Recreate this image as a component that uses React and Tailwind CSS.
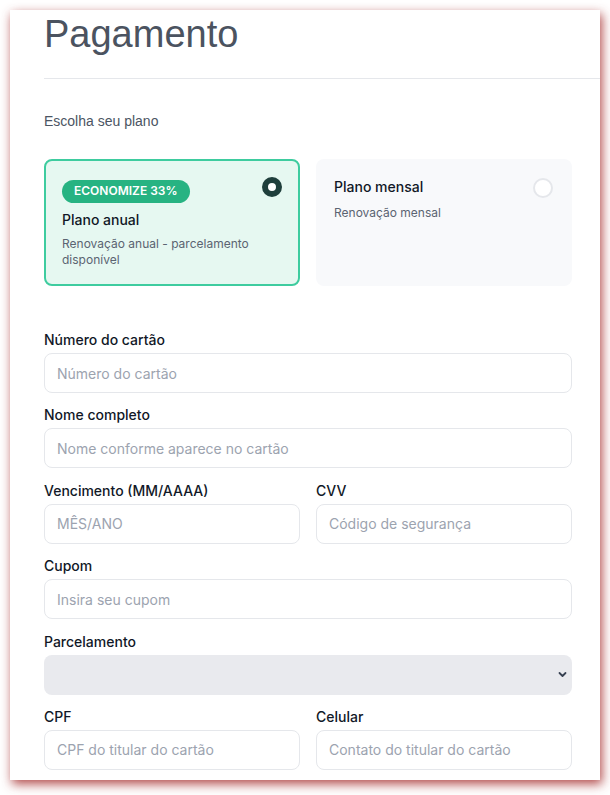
import React from 'react';

const inter = { fontFamily: 'Inter, "Noto Sans", sans-serif' };

function Field({ label, placeholder }) {
  return (
    <div className="flex flex-col">
      <label className="text-[14px] leading-5 font-medium text-[#111827]">{label}</label>
      <input
        placeholder={placeholder}
        className="mt-[3px] h-10 rounded-lg border border-[#e5e7eb] bg-white px-3 text-[14px] text-gray-900 placeholder:text-[#9ca3af] outline-none"
      />
    </div>
  );
}

export default function App() {
  return (
    <div className="min-h-screen bg-white pl-[10px] pt-[10px]">
      <div
        className="w-[590px] h-[770px] overflow-hidden bg-white pl-[34px] pr-[28px] shadow-[2px_4px_10px_rgba(165,45,45,0.85)]"
        style={inter}
      >
        <h1 className="mt-[2px] text-[38px] leading-[44px] text-[#4b5360] font-['Liberation_Sans',Arial,sans-serif]">
          Pagamento
        </h1>
        <div className="mt-[22px] -mr-[28px] h-px bg-[#e5e7eb]" />

        <p className="mt-[32px] text-[14px] leading-5 text-[#4b5563] font-['Liberation_Sans',Arial,sans-serif]">
          Escolha seu plano
        </p>

        <div className="mt-[28px] grid grid-cols-2 gap-4">
          <div className="h-[127px] rounded-lg border-2 border-[#3ecc9f] bg-[#e6f8f1] p-4 flex justify-between">
            <div>
              <span className="inline-flex h-[23px] items-center rounded-full bg-[#27b382] px-3 text-[12px] font-semibold text-white">
                ECONOMIZE 33%
              </span>
              <div className="mt-[7px] text-[14px] leading-5 font-medium text-[#111827]">Plano anual</div>
              <div className="mt-[6px] text-[12px] leading-4 text-[#5b6472]">
                Renovação anual - parcelamento disponível
              </div>
            </div>
            <div className="h-5 w-5 shrink-0 rounded-full border-[6px] border-[#1f3f3c] bg-white" />
          </div>
          <div className="h-[127px] rounded-lg border-2 border-transparent bg-[#f8f9fb] p-4 flex justify-between">
            <div>
              <div className="text-[14px] leading-5 font-medium text-[#111827]">Plano mensal</div>
              <div className="mt-[8px] text-[12px] leading-4 text-[#5b6472]">Renovação mensal</div>
            </div>
            <div className="mt-px mr-px h-5 w-5 shrink-0 rounded-full border-2 border-[#e5e7eb] bg-white" />
          </div>
        </div>

        <div className="mt-[44px] flex flex-col gap-[12.4px]">
          <Field label="Número do cartão" placeholder="Número do cartão" />
          <Field label="Nome completo" placeholder="Nome conforme aparece no cartão" />
          <div className="grid grid-cols-2 gap-4">
            <Field label="Vencimento (MM/AAAA)" placeholder="MÊS/ANO" />
            <Field label="CVV" placeholder="Código de segurança" />
          </div>
          <Field label="Cupom" placeholder="Insira seu cupom" />
          <div className="flex flex-col">
            <label className="text-[14px] leading-5 font-medium text-[#111827]">Parcelamento</label>
            <div className="relative mt-[3px]">
              <select className="h-10 w-full appearance-none rounded-lg bg-[#e9eaee] px-3 text-[14px] outline-none" />
              <svg
                className="pointer-events-none absolute right-[5px] top-[16px]"
                width="9"
                height="7"
                viewBox="0 0 9 7"
                fill="none"
              >
                <path d="M1.5 2l3 3 3-3" stroke="#374151" strokeWidth="1.8" strokeLinecap="round" strokeLinejoin="round" />
              </svg>
            </div>
          </div>
          <div className="grid grid-cols-2 gap-4">
            <Field label="CPF" placeholder="CPF do titular do cartão" />
            <Field label="Celular" placeholder="Contato do titular do cartão" />
          </div>
        </div>
      </div>
    </div>
  );
}
